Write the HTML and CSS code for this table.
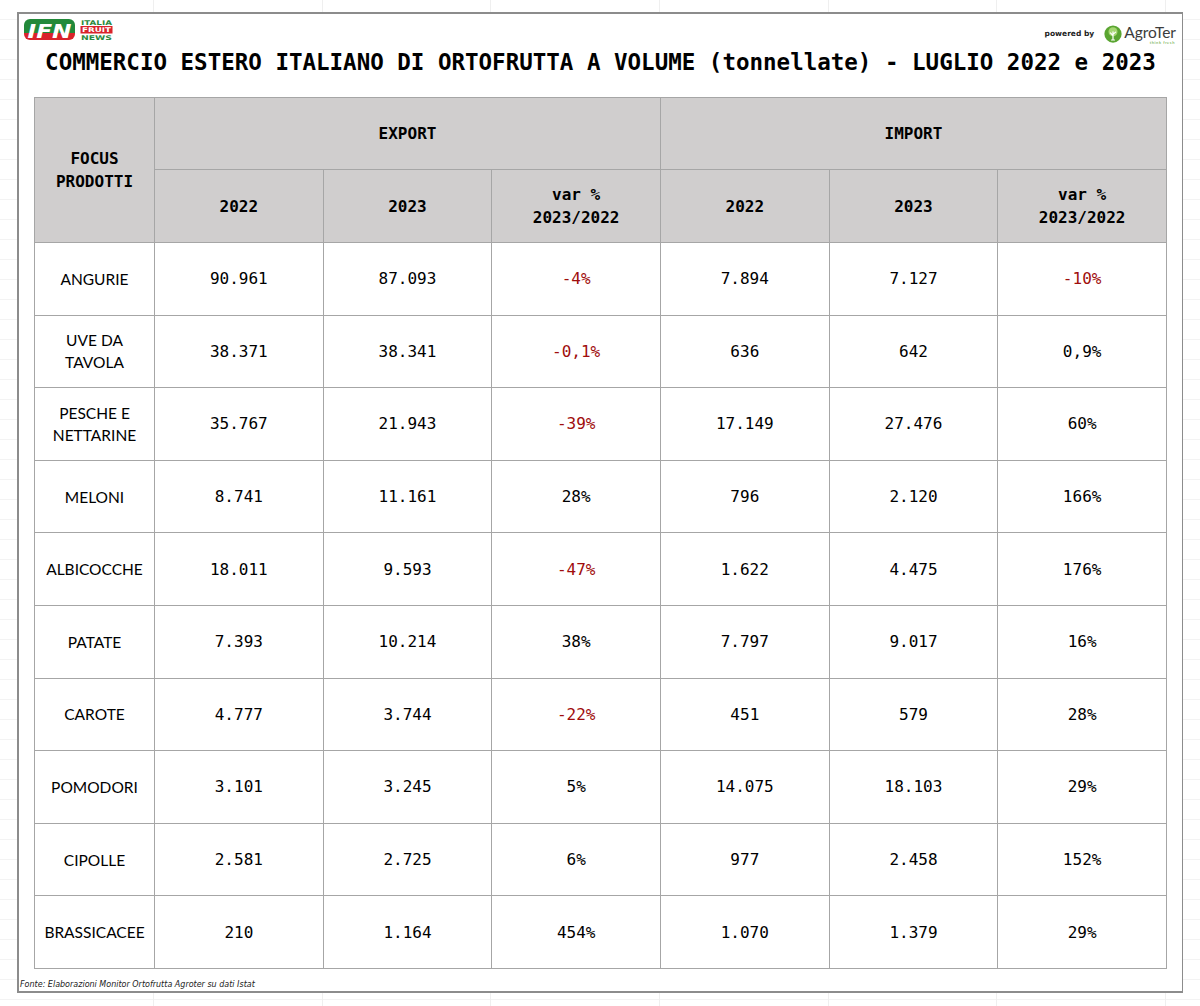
FILE: index.html
```html
<!DOCTYPE html>
<html lang="it">
<head>
<meta charset="utf-8">
<title>Commercio estero italiano di ortofrutta</title>
<link rel="stylesheet" href="styles.css">
</head>
<body>
<div class="frame">
  <div class="topbar">
    <div class="ifn">
      <svg width="92" height="26" viewBox="0 0 92 26">
        <defs>
          <clipPath id="pill"><rect x="0" y="2" width="51" height="21" rx="6" ry="6"/></clipPath>
        </defs>
        <g clip-path="url(#pill)">
          <rect x="0" y="2" width="51" height="14" fill="#22893a"/>
          <rect x="0" y="16" width="51" height="7" fill="#d9232b"/>
        </g>
        <text x="25.5" y="20.5" text-anchor="middle" class="ifn-letters" textLength="44" lengthAdjust="spacingAndGlyphs">IFN</text>
        <text x="57" y="7.5" class="ifn-small ifn-green" textLength="31" lengthAdjust="spacingAndGlyphs">ITALIA</text>
        <rect x="56.5" y="9" width="32" height="7.5" fill="#d9232b"/>
        <text x="58" y="15.3" class="ifn-small ifn-white" textLength="29" lengthAdjust="spacingAndGlyphs">FRUIT</text>
        <text x="57" y="23" class="ifn-small ifn-green" textLength="31" lengthAdjust="spacingAndGlyphs">NEWS</text>
      </svg>
    </div>
    <div class="powered">
      <span class="pby">powered by</span>
      <svg width="18" height="18" viewBox="0 0 24 24" class="agro-mark">
        <circle cx="12" cy="12" r="11.5" fill="#5aa531"/>
        <circle cx="12" cy="9" r="6" fill="#a5d672"/>
        <path d="M12 9 L12 20 M12 14 L8.5 10.5 M12 12.5 L15.5 9.5 M10 20 L14 20" stroke="#fff" stroke-width="1.6" fill="none" stroke-linecap="round"/>
      </svg>
      <span class="agro-word">AgroTer<span class="agro-sub">think fresh</span></span>
    </div>
  </div>
  <h1 class="title">COMMERCIO ESTERO ITALIANO DI ORTOFRUTTA A VOLUME (tonnellate) - LUGLIO 2022 e 2023</h1>
  <table class="data">
    <colgroup>
      <col class="c-name">
      <col class="c-val"><col class="c-val"><col class="c-val">
      <col class="c-val"><col class="c-val"><col class="c-val">
    </colgroup>
    <thead>
      <tr class="h1">
        <th rowspan="2">FOCUS<br>PRODOTTI</th>
        <th colspan="3">EXPORT</th>
        <th colspan="3">IMPORT</th>
      </tr>
      <tr class="h2">
        <th>2022</th><th>2023</th><th>var %<br>2023/2022</th>
        <th>2022</th><th>2023</th><th>var %<br>2023/2022</th>
      </tr>
    </thead>
    <tbody>
      <tr><td class="name">ANGURIE</td><td>90.961</td><td>87.093</td><td class="neg">-4%</td><td>7.894</td><td>7.127</td><td class="neg">-10%</td></tr>
      <tr><td class="name">UVE DA<br>TAVOLA</td><td>38.371</td><td>38.341</td><td class="neg">-0,1%</td><td>636</td><td>642</td><td>0,9%</td></tr>
      <tr><td class="name">PESCHE E<br>NETTARINE</td><td>35.767</td><td>21.943</td><td class="neg">-39%</td><td>17.149</td><td>27.476</td><td>60%</td></tr>
      <tr><td class="name">MELONI</td><td>8.741</td><td>11.161</td><td>28%</td><td>796</td><td>2.120</td><td>166%</td></tr>
      <tr><td class="name">ALBICOCCHE</td><td>18.011</td><td>9.593</td><td class="neg">-47%</td><td>1.622</td><td>4.475</td><td>176%</td></tr>
      <tr><td class="name">PATATE</td><td>7.393</td><td>10.214</td><td>38%</td><td>7.797</td><td>9.017</td><td>16%</td></tr>
      <tr><td class="name">CAROTE</td><td>4.777</td><td>3.744</td><td class="neg">-22%</td><td>451</td><td>579</td><td>28%</td></tr>
      <tr><td class="name">POMODORI</td><td>3.101</td><td>3.245</td><td>5%</td><td>14.075</td><td>18.103</td><td>29%</td></tr>
      <tr><td class="name">CIPOLLE</td><td>2.581</td><td>2.725</td><td>6%</td><td>977</td><td>2.458</td><td>152%</td></tr>
      <tr><td class="name">BRASSICACEE</td><td>210</td><td>1.164</td><td>454%</td><td>1.070</td><td>1.379</td><td>29%</td></tr>
    </tbody>
  </table>
  <p class="source">Fonte: Elaborazioni Monitor Ortofrutta Agroter su dati Istat</p>
</div>
</body>
</html>
```

FILE: styles.css
```css
html, body {
  margin: 0;
  padding: 0;
}
body {
  width: 1200px;
  height: 1006px;
  background-color: #ffffff;
  background-image:
    repeating-linear-gradient(to right, transparent 0, transparent 153px, #efefef 153px, #efefef 154px, transparent 154px, transparent 168.67px),
    repeating-linear-gradient(to bottom, transparent 0, transparent 19px, #f3f3f3 19px, #f3f3f3 20px);
  padding-top: 12px;
  box-sizing: border-box;
  font-family: "DejaVu Sans Mono", "Liberation Mono", monospace;
  color: #000;
}
.frame {
  margin-left: 17px;
  width: 1166px;
  height: 981px;
  box-sizing: border-box;
  border: 2px solid #8c8c8c;
  border-right-width: 1.5px;
  background: #fff;
  display: flex;
  flex-direction: column;
}
.topbar {
  height: 32px;
  display: flex;
  justify-content: space-between;
  align-items: flex-start;
  padding: 3px 6px 0 5px;
  box-sizing: border-box;
}
.ifn svg { display: block; }
.ifn-letters {
  font-family: "DejaVu Sans", sans-serif;
  font-weight: bold;
  font-style: italic;
  font-size: 20px;
  fill: #fff;
}
.ifn-small {
  font-family: "DejaVu Sans", sans-serif;
  font-size: 6.4px;
  font-weight: bold;
}
.ifn-green { fill: #2b8a3e; }
.ifn-white { fill: #fff; }
.powered {
  display: flex;
  align-items: center;
  gap: 2px;
  margin-top: 6px;
}
.pby {
  font-family: "DejaVu Sans", sans-serif;
  font-weight: bold;
  font-size: 7.5px;
  margin-right: 8px;
  color: #222;
}
.agro-mark { display: block; }
.agro-word {
  position: relative;
  font-family: "Lato", "DejaVu Sans", sans-serif;
  font-size: 15.5px;
  color: #3c3c3c;
  line-height: 18px;
  padding-bottom: 3px;
}
.agro-sub {
  position: absolute;
  right: 1px;
  bottom: -1px;
  font-size: 4px;
  letter-spacing: 0.6px;
  color: #5aa531;
  line-height: 4px;
}
.title {
  margin: 0;
  height: 32px;
  line-height: 32px;
  text-align: center;
  font-family: "DejaVu Sans Mono", "Liberation Mono", monospace;
  font-weight: bold;
  font-size: 22.5px;
  white-space: nowrap;
}
.data {
  margin: 19px 0 0 15px;
  width: 1132px;
  border-collapse: collapse;
  table-layout: fixed;
  font-size: 16px;
}
.c-name { width: 120px; }
.c-val { width: 168.67px; }
.data th, .data td {
  border: 1px solid #a6a6a6;
  text-align: center;
  vertical-align: middle;
  padding: 0;
  line-height: 23px;
}
.data th {
  background: #d0cece;
  font-weight: bold;
}
.data .h1 { height: 72px; }
.data .h2 { height: 73px; }
.data tbody tr { height: 72.6px; }
.data td.name {
  font-family: "Lato", "Open Sans", sans-serif;
  font-size: 15.5px;
  line-height: 22px;
}
.data td.neg { color: #a00d0d; }
.source {
  margin: auto 0 1px 0;
  font-family: "DejaVu Sans", sans-serif;
  font-style: italic;
  font-size: 8px;
  line-height: 10px;
  padding-left: 1px;
  color: #222;
}
```
